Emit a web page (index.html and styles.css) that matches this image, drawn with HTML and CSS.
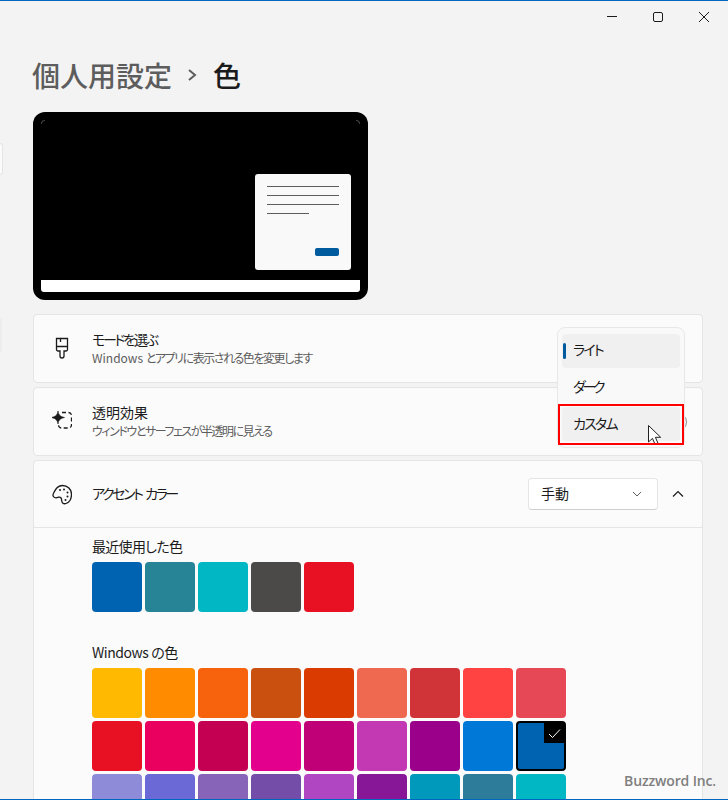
FILE: index.html

```html
<!DOCTYPE html>
<html lang="ja">
<head>
  <meta charset="UTF-8">
  <meta name="viewport" content="width=device-width, initial-scale=1.0">
  <title>色</title>
  <link rel="stylesheet" href="styles.css">
</head>
<body>

  <div class="window">
    <div class="titlebar">
      <span class="win-btn">
        <svg width="12" height="12" viewBox="0 0 12 12"><path d="M1 5.500h10" class="win-icon"/></svg>
      </span>
      <span class="win-btn">
        <svg width="12" height="12" viewBox="0 0 12 12"><rect x="1.500" y="1.500" width="9" height="9" rx="1.500" class="win-icon"/></svg>
      </span>
      <span class="win-btn">
        <svg width="12" height="12" viewBox="0 0 12 12"><path d="M1 1l10 10M11 1L1 11" class="win-icon"/></svg>
      </span>
    </div>

    <!-- bits of the sidebar that show at the left edge -->
    <div class="nav-stub nav-stub-top"></div>
    <div class="nav-stub nav-stub-active"></div>

    <h1 class="page-title">
      <span class="crumb">個人用設定</span>
      <svg class="crumb-sep" width="10" height="12" viewBox="0 0 10 12"><path d="M2 1l6 5-6 5"/></svg>
      <span class="current">色</span>
    </h1>

    <div class="preview">
      <div class="screen">
        <span class="corner corner-left"></span>
        <span class="corner corner-right"></span>
        <div class="desktop">
          <div class="dialog">
            <div class="dialog-line"></div>
            <div class="dialog-line"></div>
            <div class="dialog-line"></div>
            <div class="dialog-line dialog-line-short"></div>
            <div class="dialog-btn"></div>
          </div>
        </div>
        <div class="taskbar"></div>
      </div>
    </div>

    <div class="card">
      <div class="row">
        <svg class="row-icon" width="20" height="23" viewBox="0 0 20 23">
          <path d="M4.500 1.500h11v11a1.500 1.500 0 0 1-1.500 1.500h-2v5a2 2 0 0 1-4 0v-5H6a1.500 1.500 0 0 1-1.500-1.500z"/>
          <path d="M4.500 9.500h11M8.500 1.500v3.500"/>
        </svg>
        <div class="row-text">
          <div class="row-title tight-mode">モードを選ぶ</div>
          <div class="row-sub">Windows <span class="tight-sub">とアプリに表示される色を変更します</span></div>
        </div>
      </div>
    </div>

    <div class="card">
      <div class="row">
        <svg class="row-icon" width="20" height="23" viewBox="0 0 20 23">
          <path class="dash" d="M10 2.500h6.500a3 3 0 0 1 3 3v9.500a3 3 0 0 1-3 3H9.500a3 3 0 0 1-3-3v-2"/>
          <path class="star" d="M6 1c.5 3.300 1.500 5.300 6.500 6.500C7.500 8.700 6.500 10.700 6 14c-.5-3.300-1.500-5.300-6.500-6.500C4.500 6.300 5.500 4.300 6 1z"/>
        </svg>
        <div class="row-text">
          <div class="row-title">透明効果</div>
          <div class="row-sub"><span class="tight-sub">ウィンドウとサーフェスが半透明に見える</span></div>
        </div>
        <span class="toggle"></span>
      </div>
    </div>

    <div class="card card-accent">
      <div class="row row-accent">
        <svg class="row-icon" width="20" height="23" viewBox="0 0 20 23">
          <path d="M10.500 2.500c5 0 9 3.800 9 8.700 0 4.500-2.200 8.300-5.500 9.300-2.600.8-4.300-.7-4.300-3 0-2.500-1.200-3.900-3.200-3.300-1.500.5-2.500 1-3.800.3C1 13.800.500 12.400 1.500 10.300c1.700-4 5-7.800 9-7.800z"/>
          <circle class="dot" cx="8" cy="7" r="1"/>
          <circle class="dot" cx="12" cy="6.500" r="1"/>
          <circle class="dot" cx="15.500" cy="9.500" r="1"/>
          <circle class="dot" cx="15.500" cy="13.500" r="1"/>
          <circle class="dot" cx="13.500" cy="17" r="1"/>
        </svg>
        <div class="row-text">
          <div class="row-title tight-accent">アクセント カラー</div>
        </div>
        <div class="select">
          <span class="select-value">手動</span>
          <svg width="10" height="6" viewBox="0 0 10 6"><path d="M1 1l4 4 4-4"/></svg>
        </div>
        <svg class="collapse" width="14" height="8" viewBox="0 0 14 8"><path d="M2 6.500l5-5 5 5"/></svg>
      </div>

      <div class="accent-body">
        <div class="label">最近使用した色</div>
        <div class="swatches">
          <div class="swatch c-0063b1"></div>
          <div class="swatch c-268496"></div>
          <div class="swatch c-00b7c3"></div>
          <div class="swatch c-4c4a48"></div>
          <div class="swatch c-e81123"></div>
        </div>

        <div class="label label-win">Windows の色</div>
        <div class="swatches">
          <div class="swatch c-ffb900"></div>
          <div class="swatch c-ff8c00"></div>
          <div class="swatch c-f7630c"></div>
          <div class="swatch c-ca5010"></div>
          <div class="swatch c-da3b01"></div>
          <div class="swatch c-ef6950"></div>
          <div class="swatch c-d13438"></div>
          <div class="swatch c-ff4343"></div>
          <div class="swatch c-e74856"></div>

          <div class="swatch c-e81123"></div>
          <div class="swatch c-ea005e"></div>
          <div class="swatch c-c30052"></div>
          <div class="swatch c-e3008c"></div>
          <div class="swatch c-bf0077"></div>
          <div class="swatch c-c239b3"></div>
          <div class="swatch c-9a0089"></div>
          <div class="swatch c-0078d7"></div>
          <div class="swatch c-0063b1 selected">
            <span class="check">
              <svg width="13" height="11" viewBox="0 0 13 11"><path d="M1 6l3.500 3.500L12 1.500"/></svg>
            </span>
          </div>

          <div class="swatch c-8e8cd8"></div>
          <div class="swatch c-6b69d6"></div>
          <div class="swatch c-8764b8"></div>
          <div class="swatch c-744da9"></div>
          <div class="swatch c-b146c2"></div>
          <div class="swatch c-881798"></div>
          <div class="swatch c-0099bc"></div>
          <div class="swatch c-2d7d9a"></div>
          <div class="swatch c-00b7c3"></div>
        </div>
      </div>
    </div>

    <div class="flyout">
      <div class="fly-item fly-current">ライト</div>
      <div class="fly-item fly-narrow">ダーク</div>
      <div class="fly-item fly-hover">カスタム</div>
    </div>
    <svg class="cursor" width="14" height="21" viewBox="0 0 14 21">
      <path d="M.5.500v16.500l4-3.600 2.600 6.100 2.900-1.200-2.600-6h5.300z"/>
    </svg>
    <div class="highlight"></div>

    <div class="watermark">Buzzword Inc.</div>
  </div>

</body>
</html>
```

FILE: styles.css

```css
html, body {
  margin: 0;
  padding: 0;
  height: 800px;
  overflow: hidden;
}
body {
  font-family: "Noto Sans CJK JP", "Noto Sans", sans-serif;
  font-feature-settings: "palt";
  color: #1b1b1b;
  background-color: #f3f3f3;
}
.window {
  position: relative;
  box-sizing: border-box;
  height: 800px;
  overflow: hidden;
  border-top: 1px solid #0067c0;
  border-bottom: 1px solid #0067c0;
}
.titlebar {
  display: flex;
  justify-content: flex-end;
  height: 32px;
  padding-right: 1px;
}
.win-btn {
  width: 46px;
  display: flex;
  align-items: center;
  justify-content: center;
}
.win-icon {
  fill: none;
  stroke: #1b1b1b;
  stroke-width: 1;
}
.nav-stub {
  position: absolute;
  left: 0;
  width: 2px;
  border-radius: 0 3px 3px 0;
}
.nav-stub-top {
  top: 142px;
  height: 30px;
  background-color: #fbfbfb;
  border: 1px solid #e5e5e5;
  border-left: none;
}
.nav-stub-active {
  top: 317px;
  height: 34px;
  background-color: #ededed;
}
.page-title {
  display: flex;
  align-items: center;
  margin: 22px 0 17px 32px;
  height: 40px;
  font-size: 28px;
  line-height: 40px;
  font-weight: 500;
  font-feature-settings: normal;
}
.crumb {
  color: #5d5d5d;
}
.crumb-sep {
  margin: 0 16px 0 15px;
  fill: none;
  stroke: #5d5d5d;
  stroke-width: 2;
}
.current {
  color: #1b1b1b;
}
.preview {
  box-sizing: border-box;
  width: 335px;
  height: 188px;
  margin: 0 0 14px 33px;
  padding: 8px;
  background-color: #000;
  border-radius: 12px;
}
.screen {
  position: relative;
  height: 100%;
  display: flex;
  flex-direction: column;
}
.corner {
  position: absolute;
  top: 0;
  width: 3px;
  height: 3px;
  border-top: 1px solid #444;
}
.corner-left {
  left: 0;
  border-left: 1px solid #444;
  border-top-left-radius: 4px;
}
.corner-right {
  right: 0;
  border-right: 1px solid #444;
  border-top-right-radius: 4px;
}
.desktop {
  flex: 1;
  display: flex;
  justify-content: flex-end;
  align-items: flex-end;
  padding: 0 9px 10px 0;
}
.dialog {
  box-sizing: border-box;
  width: 96px;
  height: 96px;
  padding: 12px;
  background-color: #f9f9f9;
  border-radius: 3px;
  display: flex;
  flex-direction: column;
  gap: 8px;
}
.dialog-line {
  height: 1px;
  background-color: #5d5d5d;
}
.dialog-line-short {
  width: 42px;
}
.dialog-btn {
  width: 24px;
  height: 8px;
  margin-top: auto;
  margin-bottom: 2px;
  align-self: flex-end;
  background-color: #005a9e;
  border-radius: 2px;
}
.taskbar {
  height: 12px;
  background-color: #fff;
  border-radius: 0 0 3px 3px;
}
.card {
  box-sizing: border-box;
  width: 670px;
  height: 69px;
  margin: 0 0 4px 33px;
  background-color: #fbfbfb;
  border: 1px solid #e5e5e5;
  border-radius: 4px;
}
.card-accent {
  height: 400px;
}
.row {
  position: relative;
  display: flex;
  align-items: center;
  height: 67px;
  padding: 0 17px 0 18px;
}
.row-accent {
  height: 66px;
  border-bottom: 1px solid #e5e5e5;
}
.row-icon {
  flex: none;
  margin-right: 20px;
  fill: none;
  stroke: #1b1b1b;
  stroke-width: 1.300;
}
.row-icon .dash {
  stroke-dasharray: 4 2.500;
}
.row-icon .star {
  fill: #1b1b1b;
  stroke: #1b1b1b;
  stroke-width: 0.600;
}
.row-icon .dot {
  fill: #1b1b1b;
  stroke: none;
}
.row-text {
  flex: 1;
}
.row-title {
  font-size: 14px;
  line-height: 16px;
}
.tight-mode {
  letter-spacing: -2.300px;
}
.tight-accent {
  margin-bottom: 2px;
  letter-spacing: -2.400px;
  word-spacing: 3px;
}
.row-sub {
  margin-top: 2px;
  font-size: 12px;
  line-height: 18px;
  color: #5d5d5d;
}
.tight-sub {
  letter-spacing: -1.450px;
}
.toggle {
  box-sizing: border-box;
  width: 40px;
  height: 20px;
  margin-right: -2px;
  border: 1px solid #8a8a8a;
  border-radius: 10px;
}
.select {
  box-sizing: border-box;
  width: 130px;
  height: 32px;
  display: flex;
  align-items: center;
  justify-content: space-between;
  padding: 0 15px 0 12px;
  font-size: 14px;
  background-color: #fff;
  border: 1px solid #e5e5e5;
  border-bottom-color: #cfcfcf;
  border-radius: 4px;
}
.select-value {
  margin-bottom: 2px;
}
.select svg {
  fill: none;
  stroke: #5d5d5d;
  stroke-width: 1;
}
.collapse {
  margin-left: 13px;
  fill: none;
  stroke: #1b1b1b;
  stroke-width: 1.200;
}
.accent-body {
  padding: 10px 0 0 58px;
}
.label {
  font-size: 14px;
  line-height: 16px;
  margin-bottom: 8px;
  letter-spacing: -0.700px;
}
.label-win {
  margin-top: 32px;
  letter-spacing: -0.450px;
}
.swatches {
  display: grid;
  grid-template-columns: repeat(9, 50px);
  grid-auto-rows: 50px;
  gap: 3px;
}
.swatch {
  position: relative;
  box-sizing: border-box;
  border-radius: 4px;
}
.selected {
  border: 2px solid #000;
}
.check {
  position: absolute;
  top: 0;
  right: 0;
  width: 20px;
  height: 20px;
  display: flex;
  align-items: center;
  justify-content: center;
  background-color: #000;
}
.check svg {
  fill: none;
  stroke: #fff;
  stroke-width: 1;
}
.c-0063b1 { background-color: #0063b1; }
.c-268496 { background-color: #268496; }
.c-00b7c3 { background-color: #00b7c3; }
.c-4c4a48 { background-color: #4c4a48; }
.c-e81123 { background-color: #e81123; }
.c-ffb900 { background-color: #ffb900; }
.c-ff8c00 { background-color: #ff8c00; }
.c-f7630c { background-color: #f7630c; }
.c-ca5010 { background-color: #ca5010; }
.c-da3b01 { background-color: #da3b01; }
.c-ef6950 { background-color: #ef6950; }
.c-d13438 { background-color: #d13438; }
.c-ff4343 { background-color: #ff4343; }
.c-e74856 { background-color: #e74856; }
.c-ea005e { background-color: #ea005e; }
.c-c30052 { background-color: #c30052; }
.c-e3008c { background-color: #e3008c; }
.c-bf0077 { background-color: #bf0077; }
.c-c239b3 { background-color: #c239b3; }
.c-9a0089 { background-color: #9a0089; }
.c-0078d7 { background-color: #0078d7; }
.c-8e8cd8 { background-color: #8e8cd8; }
.c-6b69d6 { background-color: #6b69d6; }
.c-8764b8 { background-color: #8764b8; }
.c-744da9 { background-color: #744da9; }
.c-b146c2 { background-color: #b146c2; }
.c-881798 { background-color: #881798; }
.c-0099bc { background-color: #0099bc; }
.c-2d7d9a { background-color: #2d7d9a; }

/* open dropdown and what sits on top of it */
.flyout {
  position: absolute;
  left: 557px;
  top: 326px;
  box-sizing: border-box;
  width: 128px;
  height: 121px;
  padding: 6px 4px;
  display: flex;
  flex-direction: column;
  gap: 3px;
  background-color: #f9f9f9;
  border: 1px solid #e8e8e8;
  border-radius: 8px;
}
.fly-item {
  position: relative;
  height: 33.500px;
  line-height: 31px;
  padding-left: 11px;
  font-size: 14px;
  letter-spacing: -1.800px;
  border-radius: 4px;
}
.fly-narrow {
  letter-spacing: -3.300px;
}
.fly-hover {
  line-height: 33px;
}
.fly-current,
.fly-hover {
  background-color: #f0f0f0;
}
.fly-current::before {
  content: "";
  position: absolute;
  left: 1px;
  top: 9px;
  width: 3px;
  height: 16px;
  background-color: #005a9e;
  border-radius: 2px;
}
.highlight {
  position: absolute;
  left: 558px;
  top: 403px;
  box-sizing: border-box;
  width: 126px;
  height: 41px;
  border: 2px solid #f00;
}
.cursor {
  position: absolute;
  left: 648px;
  top: 424px;
  fill: #fff;
  stroke: #222;
  stroke-width: 1;
}
.watermark {
  position: absolute;
  right: 12px;
  bottom: 9px;
  font-family: "Open Sans", sans-serif;
  font-size: 14px;
  font-weight: 600;
  letter-spacing: -0.150px;
  color: #7f7f7f;
}
```
